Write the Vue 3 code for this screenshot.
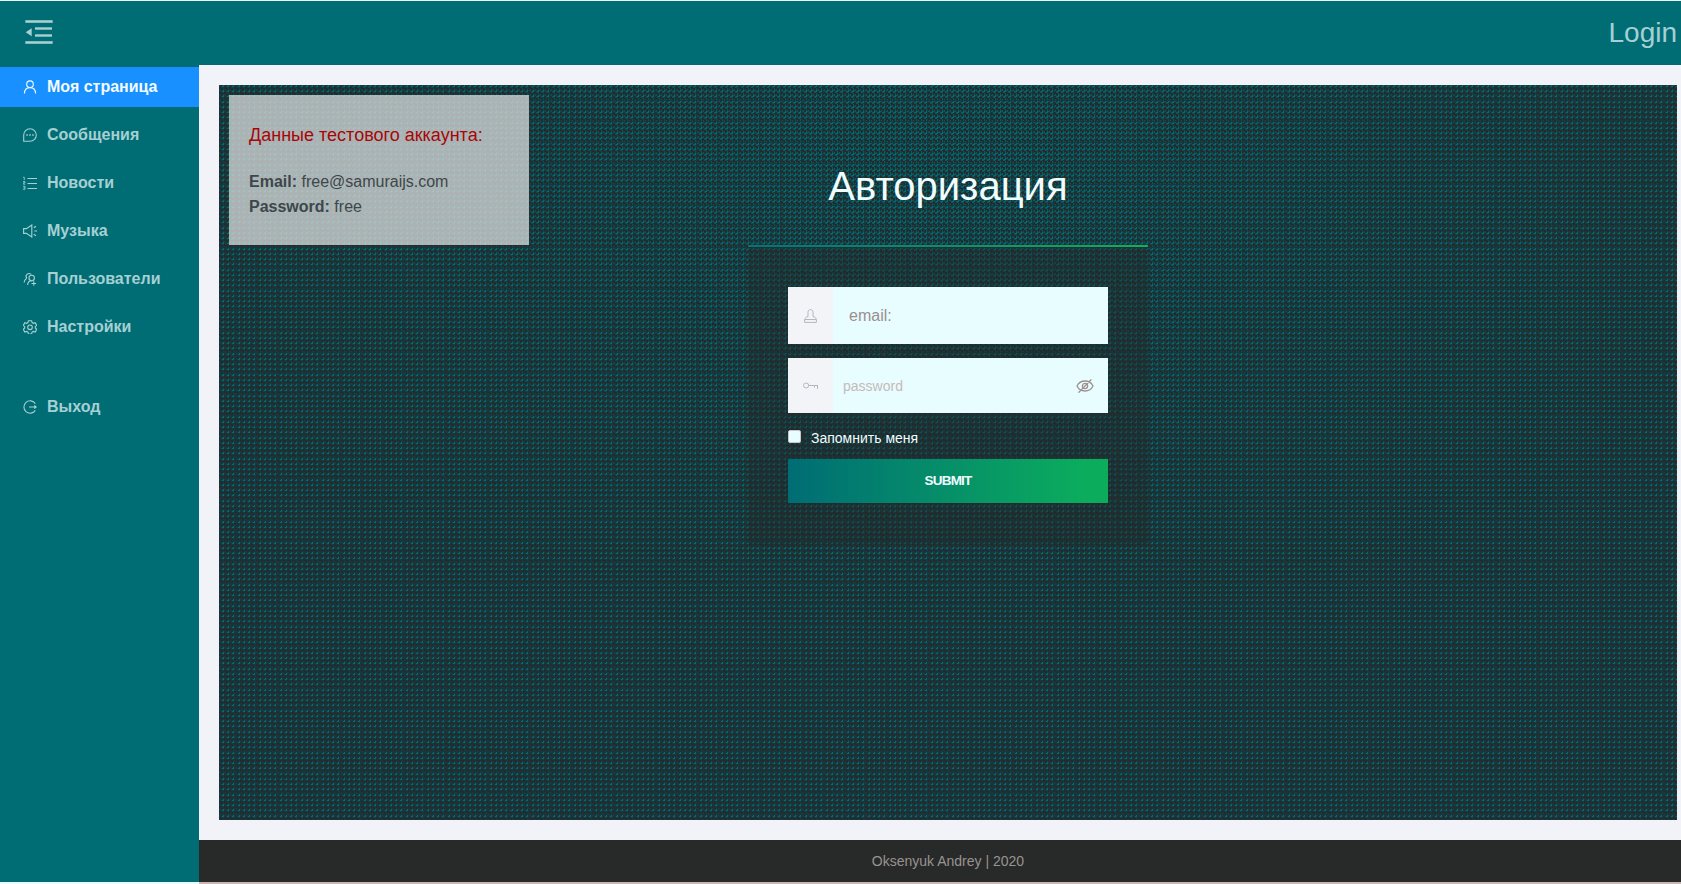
<script setup>
const items = [
  { t: 'Моя страница', i: 'user', on: true },
  { t: 'Сообщения', i: 'msg' },
  { t: 'Новости', i: 'list' },
  { t: 'Музыка', i: 'sound' },
  { t: 'Пользователи', i: 'users' },
  { t: 'Настройки', i: 'gear' },
  { t: 'Выход', i: 'exit', gap: true },
]
// four cells per 21px tile, snapped to whole pixels
const steps = [0, 5, 10, 16]
const cells = steps.flatMap((y) => steps.map((x) => ({ x, y })))
const path = (fn) => cells.map(fn).join('')
const dark = path((c) => `M${c.x} ${c.y + 2}h2v2h-2zM${c.x + 2} ${c.y + 3}h2v2h-2z`)
const spark = path((c) => `M${c.x + 4} ${c.y}h1v2h-1zM${c.x + 3} ${c.y + 1}h1v1h-1z`)
const extra = path((c) => `M${c.x} ${c.y}h2v1h-2zM${c.x + 2} ${c.y + 1}h2v2h-2zM${c.x + 4} ${c.y + 3}h1v2h-1zM${c.x + 1} ${c.y + 4}h1v1h-1z`)
</script>

<template>
  <div class="page">
    <header class="top">
      <svg class="fold" width="28" height="25" viewBox="0 0 28 25" fill="currentColor">
        <rect x="0.3" y="0.2" width="27.4" height="2.6" /><rect x="10" y="7.3" width="17" height="2.4" />
        <rect x="10" y="14.3" width="17" height="2.4" /><rect x="0.3" y="21.2" width="27.4" height="2.6" />
        <path d="M6.7 8.2v8L.7 12.2z" />
      </svg>
      <a class="login">Login</a>
    </header>
    <div class="body">
      <nav class="side">
        <a v-for="m in items" :key="m.i" class="item" :class="{ on: m.on, gap: m.gap }">
          <svg class="ico" width="14" height="14" viewBox="0 0 14 14" fill="none" stroke="currentColor" stroke-width="1.1">
            <template v-if="m.i === 'user'"><circle cx="7" cy="4.2" r="3.3" /><path d="M1.4 13.5C1.6 9.8 4 7.6 7 7.6s5.400 2.200 5.600 5.900" /></template>
            <template v-else-if="m.i === 'msg'"><path d="M.7 13.300V7A6.300 6.300 0 1 1 7 13.300z" /><path d="M3.300 7h1.500M6.250 7h1.500M9.200 7h1.500" stroke-width="1.500" /></template>
            <template v-else-if="m.i === 'list'"><path d="M4.500 2.500h9.500M4.500 7.500H14M4.500 12.500H14" /><path d="M0 1.300h1.300v2.700M0 5.600h2v1.300H.3v1.300h2M0 10.300h2v3H0M.5 11.800H2" stroke-width=".8" /></template>
            <template v-else-if="m.i === 'sound'"><path d="M.6 4.600h2.800L8.800 1v12L3.400 9.400H.6zM11.300 7H14M10.800 3.700l2.200-1.400M10.800 10.300l2.200 1.400" /></template>
            <template v-else-if="m.i === 'users'"><path d="M3.800 6.200A2.900 2.900 0 1 1 8.300 2.500M3.800 6.200C2 7.200 1.200 8.700 1.100 10.500" /><circle cx="8.700" cy="6" r="2.700" /><path d="M4.700 13c0-2.800 1.600-4.300 4-4.300h.6M8.500 11.500h4.600M10.800 9.200v4.600" /></template>
            <template v-else-if="m.i === 'gear'"><path d="M5.400.700h3.200l.5 1.900 1.200.700 1.900-.600 1.500 2.700-1.400 1.300v1.300l1.400 1.300-1.500 2.700-1.900-.600-1.200.700-.5 1.900H5.400l-.5-1.900-1.200-.700-1.900.600L.3 9.300 1.700 8V6.700L.3 5.400l1.500-2.700 1.900.600 1.200-.700z" /><circle cx="7" cy="7.300" r="2.300" /></template>
            <template v-else><path d="M12.300 3.600a6.200 6.200 0 1 0 0 6.800M6 7h7M11.300 5.500L13.200 7l-1.900 1.500" /></template>
          </svg>
          <span>{{ m.t }}</span>
        </a>
      </nav>
      <div class="content">
        <main class="stage">
          <svg class="weave" width="100%" height="100%">
            <defs>
              <pattern id="mesh" width="21" height="21" patternUnits="userSpaceOnUse">
                <rect width="21" height="21" fill="#16383c" />
                <path :d="dark" fill="#272a2c" />
                <path :d="spark" fill="#006d75" />
              </pattern>
              <pattern id="bright" width="21" height="21" patternUnits="userSpaceOnUse">
                <path :d="extra" fill="#006d75" />
                <path :d="dark" fill="#272a2c" />
              </pattern>
              <radialGradient id="glow" cx="50%" cy="10%" r="62%">
                <stop offset="0" stop-color="#fff" stop-opacity=".7" />
                <stop offset=".5" stop-color="#fff" stop-opacity=".3" />
                <stop offset="1" stop-color="#fff" stop-opacity=".04" />
              </radialGradient>
              <mask id="lit"><rect width="100%" height="100%" fill="url(#glow)" /></mask>
            </defs>
            <rect width="100%" height="100%" fill="url(#mesh)" />
            <rect width="100%" height="100%" fill="url(#bright)" mask="url(#lit)" />
          </svg>
          <aside class="demo">
            <h4>Данные тестового аккаунта:</h4>
            <p><b>Email:</b> free@samuraijs.com</p>
            <p><b>Password:</b> free</p>
          </aside>
          <section class="auth">
            <h1>Авторизация</h1>
            <form class="card">
              <div class="field email">
                <span class="addon"><svg width="13" height="14" viewBox="0 0 13 14" fill="none" stroke="currentColor"><path d="M4 7.600V3.200C4 1.500 5 .6 6.500.6S9 1.500 9 3.200v4.400M4 7.500C1.800 8 1 9 .8 10.500h11.400C12 9 11.200 8 9 7.500M.6 10.500v2.900h11.800v-2.900" /></svg></span>
                <span class="hint">email:</span>
              </div>
              <div class="field pass">
                <span class="addon"><svg width="16" height="8" viewBox="0 0 16 8" fill="none" stroke="currentColor"><rect x=".6" y="1.200" width="5" height="4.600" rx="2" /><path d="M5.600 3.500H15M11.500 3.500v2M14.500 3.500V7" /></svg></span>
                <span class="hint">password</span>
                <svg class="eye" width="18" height="14" viewBox="0 0 18 14" fill="none" stroke="currentColor" stroke-width="1.300"><path d="M1 7c1.600-3.300 4.300-5 8-5s6.400 1.700 8 5c-1.600 3.300-4.300 5-8 5S2.600 10.300 1 7zM2.500 13.700L15.300.5" /><circle cx="9" cy="7" r="2.600" /></svg>
              </div>
              <label class="remember"><i class="box"></i>Запомнить меня</label>
              <div class="submit" role="button">SUBMIT</div>
            </form>
          </section>
        </main>
        <footer class="foot">Oksenyuk Andrey | 2020</footer>
      </div>
    </div>
  </div>
</template>

<style>
body { background: #e8fdff; }
</style>
<style scoped>
* { box-sizing: border-box; }
.page { width: 1681px; height: 884px; padding-top: 1px; display: flex; flex-direction: column; overflow: hidden; font-family: "Liberation Sans", Arial, sans-serif; background: #e8fdff; }
.top { height: 64px; flex: none; display: flex; justify-content: space-between; background: #006d75; color: #a6d0d3; padding: 0 4px 0 25px; }
.fold { margin-top: 19px; }
.login { font-size: 28px; line-height: 64px; }
.body { flex: 1; display: flex; min-height: 0; }
.side { width: 199px; flex: none; background: #006d75; padding-top: 2px; margin-bottom: 2px; }
.item { display: flex; align-items: center; gap: 10px; height: 40px; margin-bottom: 8px; padding-left: 23px; color: #a6d0d3; font-size: 16px; line-height: 40px; font-weight: 700; }
.item.on { background: #1890ff; color: #f3fbff; }
.item.gap { margin-top: 40px; }
.content { flex: 1; display: flex; flex-direction: column; background: #f1f3f8; border-bottom: 2px solid #cbb6b3; }
.stage { position: relative; height: 735px; margin: 20px 4px 20px 20px; flex: none; overflow: hidden; }
.weave { position: absolute; inset: 0; shape-rendering: crispEdges; }
.demo { position: absolute; left: 10px; top: 10px; width: 300px; height: 150px; padding: 26px 20px 0; background: rgba(220, 222, 222, .75); color: #3d474b; }
h4 { margin: 0 0 20px; font-size: 18px; line-height: 28px; font-weight: 400; color: #a90507; }
.demo p { margin: 0; font-size: 16px; line-height: 25px; }
.auth { position: relative; width: 400px; margin: 0 auto; padding-top: 73px; }
h1 { margin: 0; text-align: center; color: #f0fdff; font-size: 40px; font-weight: 400; line-height: 56px; }
.card { margin-top: 31px; height: 300px; padding: 40px; background: rgba(34, 39, 41, .4); border-top: 2px solid; border-image: linear-gradient(90deg, #087177, #13ae5d) 1; }
.field { display: flex; align-items: center; background: #e8fdff; }
.email { height: 57px; margin-bottom: 14px; }
.pass { height: 55px; }
.addon { width: 45px; height: 100%; display: flex; align-items: center; justify-content: center; background: #f3f4f8; color: #b4b7bf; }
.hint { flex: 1; padding-left: 16px; font-size: 16px; color: #9a8f8d; }
.pass .hint { padding-left: 10px; font-size: 14px; color: #c4bbb8; }
.eye { margin-right: 14px; color: #9d9290; }
.remember { display: flex; align-items: center; gap: 10px; height: 22px; margin: 14px 0 10px; font-size: 14px; color: #f0fdff; }
.box { width: 13px; height: 13px; border: 1px solid #c9c4c4; border-radius: 2px; background: #e8fdff; margin-top: -3px; }
.submit { height: 44px; line-height: 43px; text-align: center; font-size: 13.500px; font-weight: 700; letter-spacing: -.75px; color: #f0fdff; background: linear-gradient(90deg, #006d75, #0bad5d 93%); }
.foot { height: 42px; padding-left: 16px; background: #282a2a; line-height: 42px; text-align: center; font-size: 14px; color: #999390; }
</style>
